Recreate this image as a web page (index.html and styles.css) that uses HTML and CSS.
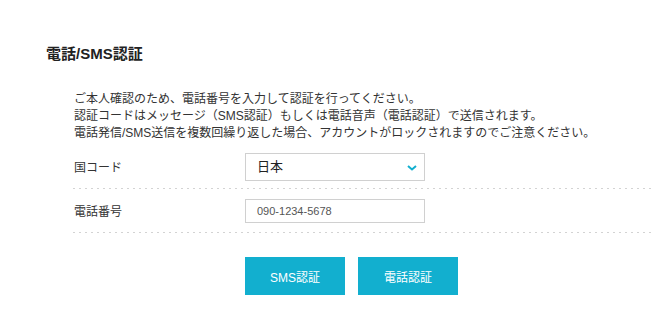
FILE: index.html
```html
<!DOCTYPE html>
<html lang="ja">
<head>
  <meta charset="UTF-8">
  <meta name="viewport" content="width=device-width, initial-scale=1.0">
  <title>電話/SMS認証</title>
  <link rel="stylesheet" href="styles.css">
</head>
<body>
  <div class="auth">
    <h2 class="auth-title">電話/SMS認証</h2>

    <p class="auth-desc">
      ご本人確認のため、電話番号を入力して認証を行ってください。<br>
      認証コードはメッセージ（SMS認証）もしくは電話音声（電話認証）で送信されます。<br>
      電話発信/SMS送信を複数回繰り返した場合、アカウントがロックされますのでご注意ください。
    </p>

    <form class="auth-form">
      <div class="form-row">
        <label class="form-label" for="country">国コード</label>
        <div class="select-wrap">
          <select id="country" class="form-select">
            <option>日本</option>
          </select>
          <svg class="select-arrow" width="10" height="6" viewBox="0 0 10 6">
            <polyline points="1,1 5,4.5 9,1" fill="none" stroke="#12afcf" stroke-width="2"/>
          </svg>
        </div>
      </div>
      <div class="form-row">
        <label class="form-label" for="tel">電話番号</label>
        <input type="text" id="tel" class="form-input" placeholder="090-1234-5678">
      </div>

      <div class="form-buttons">
        <button type="button" class="btn">SMS認証</button>
        <button type="button" class="btn">電話認証</button>
      </div>
    </form>
  </div>
</body>
</html>
```

FILE: styles.css
```css
body {
  margin: 0;
  padding: 0;
  font-family: "Liberation Sans", "Noto Sans CJK JP", sans-serif;
  background-color: #fff;
  color: #333;
  overflow: hidden;
}

.auth {
  padding: 44px 0 0 46px;
}

.auth-title {
  margin: 0;
  font-size: 15px;
  line-height: 20px;
  font-weight: bold;
  color: #222;
}

.auth-desc {
  margin: 27px 0 0 28px;
  font-size: 12px;
  line-height: 17px;
}

.auth-form {
  margin: 3px 0 0 27px;
}

.form-row {
  display: flex;
  align-items: center;
  height: 43px;
  padding-bottom: 1px;
  background: repeating-linear-gradient(to right, #d3d3d3 0 2px, transparent 2px 6px) left bottom / 100% 1px no-repeat;
}

.form-label {
  width: 171px;
  padding-left: 1px;
  font-size: 12px;
}

.select-wrap {
  position: relative;
}

.form-select {
  appearance: none;
  -webkit-appearance: none;
  width: 180px;
  height: 28px;
  padding: 0 11px;
  font-family: inherit;
  font-size: 13px;
  color: #222;
  background: #fff;
  border: 1px solid #d0d0d0;
  border-radius: 0;
  outline: none;
}

.select-arrow {
  position: absolute;
  right: 8px;
  top: 12px;
}

.form-input {
  box-sizing: border-box;
  width: 180px;
  height: 24px;
  padding: 0 11px;
  font-family: inherit;
  font-size: 11px;
  border: 1px solid #d0d0d0;
  border-radius: 0;
  outline: none;
}

.form-input::placeholder {
  color: #555;
}

.form-buttons {
  display: flex;
  gap: 13px;
  margin: 24px 0 0 172px;
}

.btn {
  width: 100px;
  height: 38px;
  padding: 0;
  font-family: inherit;
  font-size: 12px;
  color: #fff;
  background: #12afcf;
  border: none;
  cursor: pointer;
}
```
